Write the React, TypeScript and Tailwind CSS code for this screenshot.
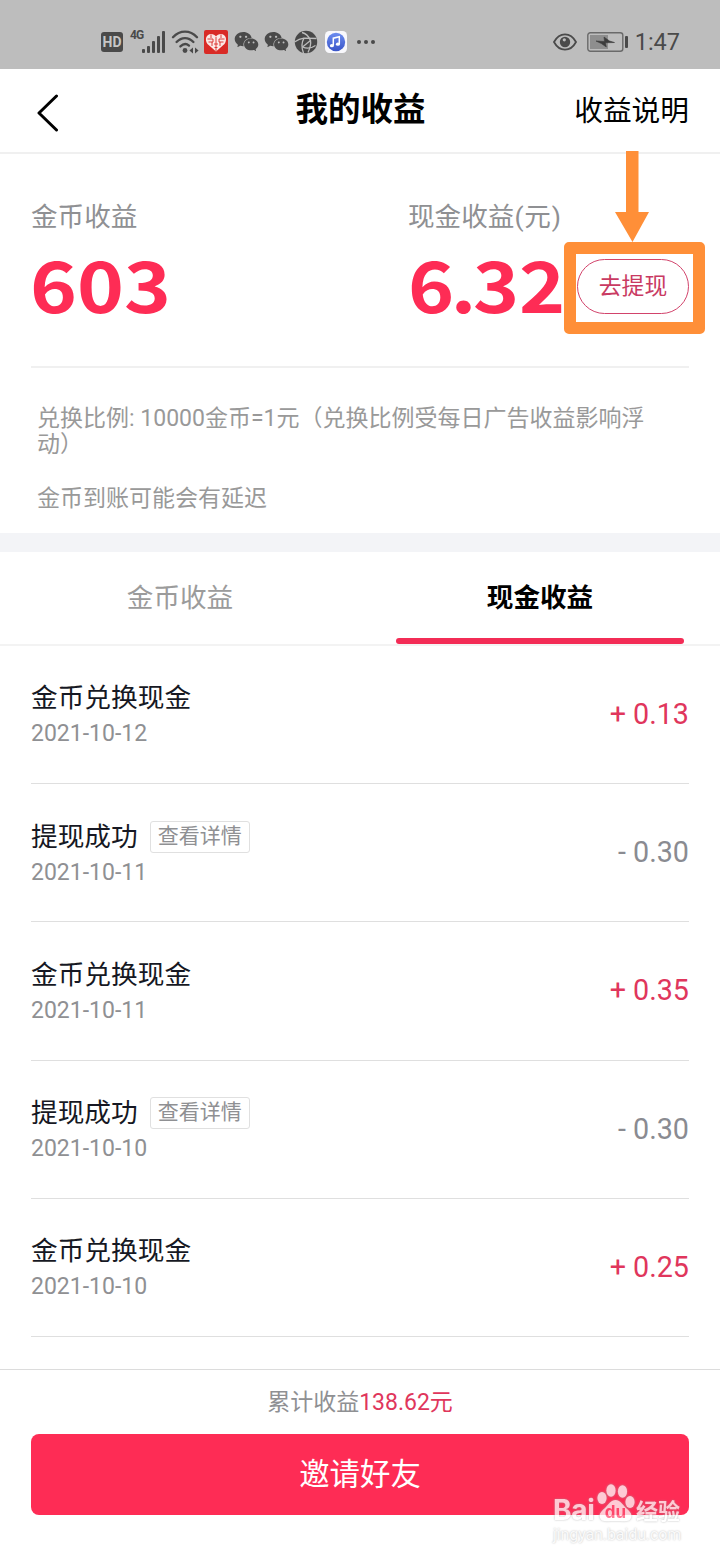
import { AiFillWechat } from "react-icons/ai";

interface EarningRecord {
  title: string;
  date: string;
  amount: string;
  income: boolean;
  hasDetail?: boolean;
}

const records: EarningRecord[] = [
  { title: "金币兑换现金", date: "2021-10-12", amount: "+ 0.13", income: true },
  { title: "提现成功", date: "2021-10-11", amount: "- 0.30", income: false, hasDetail: true },
  { title: "金币兑换现金", date: "2021-10-11", amount: "+ 0.35", income: true },
  { title: "提现成功", date: "2021-10-10", amount: "- 0.30", income: false, hasDetail: true },
  { title: "金币兑换现金", date: "2021-10-10", amount: "+ 0.25", income: true },
];

const SignalIcon = () => (
  <svg className="w-[25px] h-6" viewBox="0 0 25 24" fill="#4a4a4a">
    <rect x="1" y="19" width="3" height="4" rx="1" />
    <rect x="6" y="16" width="3" height="7" rx="1" />
    <rect x="11" y="11" width="3" height="12" rx="1" />
    <rect x="16" y="6" width="3" height="17" rx="1" />
    <rect x="21" y="1" width="3" height="22" rx="1" />
  </svg>
);

const WifiIcon = () => (
  <svg className="w-7 h-6" viewBox="0 0 28 24" fill="none" stroke="#4a4a4a" strokeWidth="2.4" strokeLinecap="round">
    <path d="M2 7.2C9-.2 19-.2 26 7.2" />
    <path d="M5.6 12C10.6 6.8 17.4 6.8 22.4 12" />
    <path d="M9.4 16.4C12.4 13.6 15.6 13.6 18 15.6" />
    <circle cx="14" cy="20.5" r="2.4" fill="#4a4a4a" stroke="none" />
    <path d="M22 17.5v6l-3.6-3zM24 17.5v6l3.6-3z" fill="#4a4a4a" stroke="none" />
  </svg>
);

const HeartAppIcon = () => (
  <svg className="w-6 h-6" viewBox="0 0 24 24">
    <rect width="24" height="24" rx="2" fill="#d92b26" />
    <path d="M12 21.5L3.500 14C.2 9.500 2.500 4 7 4c2.400 0 4 1 5 2.600C13 5 14.600 4 17 4c4.500 0 6.800 5.500 3.500 10z" fill="#fbe9e6" />
    <g stroke="#d92b26" strokeWidth=".9" fill="none">
      <path d="M12 7v14M3.500 9h5.500v3H4.500M20.500 9H15v3h4.500M7 4.500V8M17 4.500V8M8 12v4M16 12v4M10 14h4M10.500 17.500h3" />
    </g>
  </svg>
);

const BallIcon = () => (
  <svg className="w-6 h-6" viewBox="0 0 24 24">
    <circle cx="12" cy="12" r="11.2" fill="#484848" />
    <g stroke="#bdbdbd" strokeWidth="1.3" fill="none">
      <path d="M8 2.500C12 3.500 15 7 16.500 10.500c.8 4-.2 7-2.500 12" />
      <path d="M.5 12C4 9.500 7 8.500 10 8.200l12.500.3" />
      <path d="M10 8.200C7.800 12 7.500 18 9.500 23" />
      <path d="M8.500 17c4 1.800 9 1.200 13-1.500" />
      <path d="M16.500 10.500L8.500 17" />
    </g>
  </svg>
);

const MusicIcon = () => (
  <svg className="w-[22px] h-[22px]" viewBox="0 0 22 22">
    <defs>
      <linearGradient id="music" x1="0" y1="0" x2="0" y2="1">
        <stop offset="0%" stopColor="#6b8cf0" />
        <stop offset="100%" stopColor="#3a55c8" />
      </linearGradient>
    </defs>
    <rect width="22" height="22" rx="4.5" fill="#f8f8fc" />
    <circle cx="11" cy="11" r="9.2" fill="url(#music)" />
    <path d="M8.300 14.500V7.200l6-1.500v7.300" fill="none" stroke="#fff" strokeWidth="1.5" />
    <ellipse cx="6.9" cy="14.7" rx="2" ry="1.6" fill="#fff" />
    <ellipse cx="12.9" cy="13.2" rx="2" ry="1.6" fill="#fff" />
  </svg>
);

const EyeIcon = () => (
  <svg className="w-6 h-[18px]" viewBox="0 0 24 18" fill="none">
    <path d="M1 9C6.500-1.200 17.500-1.200 23 9 17.500 19.200 6.500 19.200 1 9z" stroke="#4a4a4a" strokeWidth="1.8" />
    <circle cx="12" cy="9" r="5.2" fill="#4a4a4a" />
    <circle cx="11.3" cy="6.8" r="1.6" fill="#bdbdbd" />
  </svg>
);

const BatteryIcon = () => (
  <svg className="w-[42px] h-5" viewBox="0 0 42 20">
    <rect x=".8" y=".8" width="35" height="18.4" rx="2.5" fill="none" stroke="#6a6a6a" strokeWidth="1.4" />
    <rect x="3" y="3" width="18" height="14" fill="#8e8e8e" />
    <path d="M9 9l8.500.5-.5-4.500 5.500 4 5 1.500-9 .3.800 4.200-5-3.500z" fill="#3c3c3c" stroke="#3c3c3c" strokeWidth=".6" />
    <rect x="38" y="4" width="3" height="12" rx="1" fill="#4a4a4a" />
  </svg>
);

const StatusBar = () => (
  <div className="flex h-[69px] shrink-0 items-center bg-[#bdbdbd] pt-[14px] pl-[101px] pr-[40px] text-[#4a4a4a]">
    <div className="flex h-5 w-[22px] items-center justify-center rounded-[3px] bg-[#4a4a4a] text-[14px] font-bold leading-none text-[#c6c6c6]">
      HD
    </div>
    <span className="ml-[7px] mb-[13px] w-[13px] text-[12px] font-bold leading-none tracking-[-0.8px]">4G</span>
    <div className="-ml-[2px]">
      <SignalIcon />
    </div>
    <div className="ml-[5px]">
      <WifiIcon />
    </div>
    <div className="ml-[5px]">
      <HeartAppIcon />
    </div>
    <AiFillWechat className="ml-[5px] h-[27px] w-[27px]" />
    <AiFillWechat className="ml-[3px] h-[27px] w-[27px]" />
    <div className="ml-[4px]">
      <BallIcon />
    </div>
    <div className="ml-[7px]">
      <MusicIcon />
    </div>
    <div className="ml-[10px] flex gap-[3px]">
      <span className="h-1 w-1 rounded-full bg-[#4a4a4a]" />
      <span className="h-1 w-1 rounded-full bg-[#4a4a4a]" />
      <span className="h-1 w-1 rounded-full bg-[#4a4a4a]" />
    </div>
    <div className="ml-auto flex items-center">
      <EyeIcon />
      <div className="ml-[10px]">
        <BatteryIcon />
      </div>
      <span className="ml-[6px] pt-[3px] text-[23.5px] leading-none">1:47</span>
    </div>
  </div>
);

const Header = () => (
  <header className="grid h-[85px] shrink-0 grid-cols-3 items-center border-b-2 border-[#f0f0f0] px-[31px] pb-px text-black">
    <svg className="mt-[6px] ml-[6px] h-[38px] w-[22px]" viewBox="0 0 22 38" fill="none" stroke="#000" strokeWidth="3" strokeLinecap="round" strokeLinejoin="round">
      <path d="M19.500 2L2 19l17.500 17" />
    </svg>
    <h1 className="pl-px text-center text-[32.5px] font-bold leading-10">我的收益</h1>
    <span className="pt-px text-right text-[28.7px] leading-10">收益说明</span>
  </header>
);

const Summary = () => (
  <section className="relative h-[379px] shrink-0 px-[31px]">
    <div className="flex h-[214px] border-b-2 border-[#f0f0f0] pt-[46px]">
      <div className="w-[378px]">
        <p className="text-[26.6px] leading-[34px] text-[#8f9093]">金币收益</p>
        <p className="mt-[12px] -ml-px origin-left scale-x-113 font-['Noto_Sans_CJK_SC'] text-[70.5px] font-bold leading-[72px] text-[#fe2c55]">
          603
        </p>
      </div>
      <div className="flex-1">
        <p className="text-[26.6px] leading-[34px] text-[#8f9093]">
          现金收益<span className="tracking-[0.8px]">(元)</span>
        </p>
        <div className="mt-[12px] flex">
          <p className="w-[169px] origin-left scale-x-111 font-['Noto_Sans_CJK_SC'] text-[70.5px] font-bold leading-[72px] text-[#fe2c55]">
            <span className="tracking-[-3px]">6.</span>32
          </p>
          <button className="mt-[13px] h-[55px] w-[112px] shrink-0 rounded-full border border-[#d2436b] text-[22.8px] leading-[50px] text-[#c93a62]">
            去提现
          </button>
        </div>
      </div>
    </div>
    <div className="px-[6px] pt-[38px] text-[23px] leading-[26px] text-[#999]">
      <p>
        兑换比例: 10000金币=1元（兑换比例受每日广告收益影响浮
        <br />
        动）
      </p>
      <p className="mt-[28px]">金币到账可能会有延迟</p>
    </div>
    {/* Guide arrow and highlight frame around the withdraw button */}
    <svg className="absolute left-[614px] -top-[4px] h-[93px] w-9" viewBox="0 0 36 93" fill="#ff8f38">
      <path d="M12 1h12.500v61H35L18.500 92 1 62h11z" />
    </svg>
    <div className="absolute left-[564px] top-[88px] h-[92px] w-[141px] rounded-[5px] border-12 border-[#ff8f38]" />
  </section>
);

const Tabs = () => (
  <div className="grid h-[94px] shrink-0 grid-cols-2 border-b-2 border-[#f3f3f3] text-center text-[26.6px]">
    <div className="pt-[29px] leading-[34px] text-[#9b9b9b]">金币收益</div>
    <div className="flex flex-col items-center justify-between pt-[29px] font-bold leading-[34px] text-black">
      现金收益
      <span className="h-[6px] w-72 rounded-full bg-[#f32c56]" />
    </div>
  </div>
);

const RecordRow = ({ title, date, amount, income, hasDetail }: EarningRecord) => (
  <li className="mx-[31px] flex h-[138.2px] items-center justify-between border-b border-[#dfdfdf]">
    <div className="pt-[3.6px]">
      <div className="flex h-9 items-center">
        <span className="text-[26.7px] leading-9 text-[#161823]">{title}</span>
        {hasDetail && (
          <span className="ml-[12px] h-8 w-[100px] rounded-[3px] border border-[#e0e0e0] text-center text-[21px] leading-[29px] text-[#8f9093]">
            查看详情
          </span>
        )}
      </div>
      <p className="text-[23px] leading-9 text-[#8f9093]">{date}</p>
    </div>
    <span className={income ? "text-[28.7px] text-[#e0365c]" : "text-[28.7px] text-[#8a8b91]"}>{amount}</span>
  </li>
);

const Watermark = () => (
  <div className="absolute left-[553px] top-[112px] w-[132px] text-white">
    <div className="flex h-[42px] items-end opacity-75">
      <span className="w-[43px] font-[Inter] text-[28px] font-bold leading-7 tracking-[-0.3px] [text-shadow:0_0_2px_#999]">Bai</span>
      <svg className="h-[40px] w-[40px] shrink-0 drop-shadow-[0_0_1px_#aaa]" viewBox="0 0 40 40" fill="#fff">
        <ellipse cx="6" cy="14" rx="4.6" ry="6" />
        <ellipse cx="15" cy="6.5" rx="4.6" ry="6.2" />
        <ellipse cx="26.5" cy="7.5" rx="4.6" ry="6.2" />
        <ellipse cx="34" cy="18" rx="4.6" ry="6" />
        <path d="M19.500 16c4.500 0 6.500 4 10.500 8 4 3.500 6.500 6 5 10-2 4.500-7 3-15.500 3S6 38.500 4 34c-1.500-4 1-6.500 5-10 4-4 6-8 10.500-8z" />
        <text x="19.5" y="34" textAnchor="middle" fontFamily="Inter, sans-serif" fontWeight="700" fontSize="17" fill="#ff4f72">
          du
        </text>
      </svg>
      <span className="text-[22px] font-bold leading-6 [text-shadow:0_0_2px_#999]">经验</span>
    </div>
    <p className="mt-px text-[16px] leading-5 tracking-[-0.1px] text-[#fafafa] [text-shadow:0_0_2px_#bbb]">jingyan.baidu.com</p>
  </div>
);

const Footer = () => (
  <footer className="relative h-[191px] shrink-0 border-t border-[#dcdcdc] bg-white px-[31px] pt-[16px]">
    <p className="text-center text-[23px] leading-[34px] text-[#8f9093]">
      累计收益<span className="text-[#e0365c]">138.62元</span>
    </p>
    <button className="mt-[14px] h-[81px] w-full rounded-lg bg-[#fe2c55] text-[30.4px] text-white">邀请好友</button>
    <Watermark />
  </footer>
);

const App = () => (
  <div className="flex h-[1560px] w-[720px] flex-col overflow-hidden bg-white font-[Roboto,'Noto_Sans_CJK_SC',sans-serif]">
    <StatusBar />
    <Header />
    <Summary />
    <div className="h-[19px] shrink-0 bg-[#f3f4f7]" />
    <Tabs />
    <ul className="flex-1 overflow-hidden">
      {records.map((record, index) => (
        <RecordRow key={index} {...record} />
      ))}
    </ul>
    <Footer />
  </div>
);

export default App;
